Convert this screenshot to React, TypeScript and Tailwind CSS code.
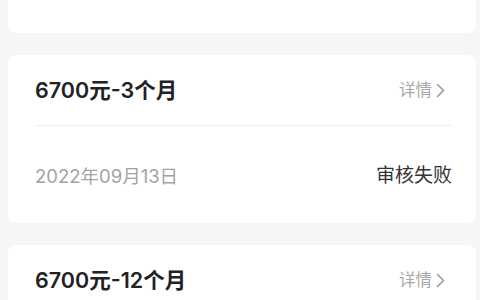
import React from "react";

const font = { fontFamily: 'Inter, "Noto Sans CJK SC", sans-serif' };

function Chevron() {
  return (
    <svg width="9" height="15" viewBox="0 0 9 15" className="ml-[4px]">
      <polyline points="1.5,1.5 7.5,7.5 1.5,13.5" fill="none" stroke="#9a9a9a" strokeWidth="1.6" strokeLinecap="round" strokeLinejoin="round" />
    </svg>
  );
}

function Card({ title, date, status }: { title: string; date: string; status: string }) {
  return (
    <div className="bg-white rounded-lg pl-[27px] pr-[24px] shrink-0">
      <div className="h-[70px] flex items-center justify-between pr-[7px]">
        <span className="text-[21.5px] leading-[26px] font-semibold text-[#222]">{title}</span>
        <span className="flex items-center text-[16.5px] leading-[20px] text-[#a8a8a8]">
          详情
          <Chevron />
        </span>
      </div>
      <div className="h-px bg-[#efefef]" />
      <div className="h-[97px] flex items-start justify-between pt-[39px]">
        <span className="text-[18.5px] leading-[22px] text-[#a3a3a3]">{date}</span>
        <span className="text-[19px] leading-[22px] text-[#333]">{status}</span>
      </div>
    </div>
  );
}

export default function App() {
  return (
    <div style={font} className="w-[480px] h-[300px] overflow-hidden bg-[#f5f6f8] pl-2 pr-1 flex flex-col gap-[22px]">
      <div className="h-[33px] shrink-0 bg-white rounded-b-lg" />
      <Card title="6700元-3个月" date="2022年09月13日" status="审核失败" />
      <Card title="6700元-12个月" date="2022年09月13日" status="审核失败" />
    </div>
  );
}
